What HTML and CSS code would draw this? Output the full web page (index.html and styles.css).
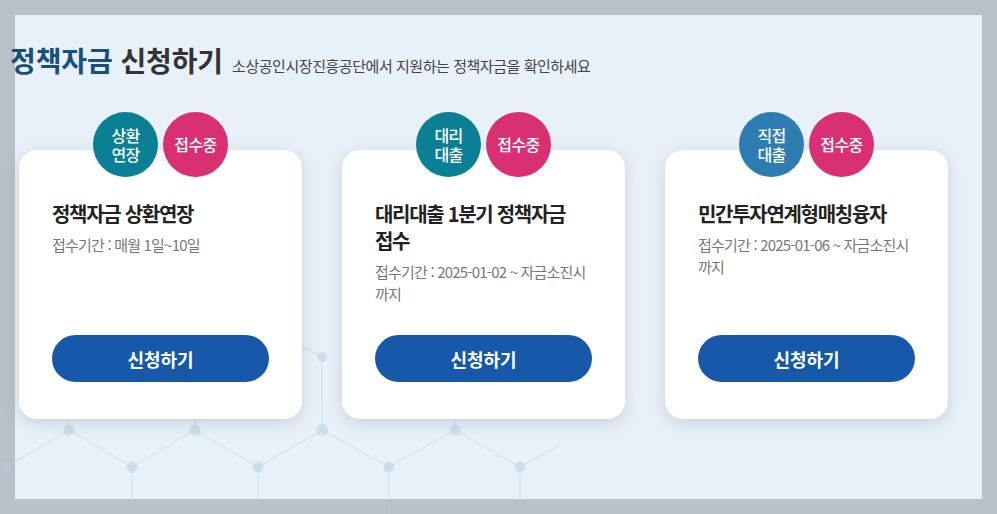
FILE: index.html
```html
<!DOCTYPE html>
<html lang="ko">
<head>
<meta charset="utf-8">
<title>정책자금 신청하기</title>
<link rel="stylesheet" href="styles.css">
</head>
<body>
<section class="panel">
  <svg class="network" width="997" height="514" viewBox="0 0 997 514" aria-hidden="true">
    <g class="lines">
      <polyline points="6,520 6,467 69,430 132,467 195,430 258,467 322,430 389,467 455,430 520,467 560,445"/>
      <line x1="132" y1="467" x2="132" y2="520"/>
      <line x1="258" y1="467" x2="258" y2="520"/>
      <line x1="389" y1="467" x2="389" y2="520"/>
      <line x1="520" y1="467" x2="520" y2="520"/>
      <line x1="322" y1="430" x2="322" y2="357"/>
      <line x1="322" y1="357" x2="290" y2="340"/>
      <line x1="69" y1="430" x2="69" y2="415"/>
      <line x1="195" y1="430" x2="195" y2="415"/>
      <line x1="455" y1="430" x2="455" y2="415"/>
    </g>
    <g class="nodes">
      <circle cx="6" cy="467" r="5.5"/>
      <circle cx="69" cy="430" r="5.5"/>
      <circle cx="132" cy="467" r="5.5"/>
      <circle cx="195" cy="430" r="5.5"/>
      <circle cx="258" cy="467" r="5.5"/>
      <circle cx="322" cy="430" r="6"/>
      <circle cx="322" cy="357" r="5"/>
      <circle cx="389" cy="467" r="5.5"/>
      <circle cx="455" cy="430" r="5.5"/>
      <circle cx="520" cy="467" r="5.5"/>
    </g>
  </svg>

  <header class="heading">
    <h1 class="title"><span class="title-accent">정책자금</span> 신청하기</h1>
    <p class="subtitle">소상공인시장진흥공단에서 지원하는 정책자금을 확인하세요</p>
  </header>

  <div class="cards">
    <article class="card">
      <div class="badges">
        <span class="badge badge-teal">상환<br>연장</span>
        <span class="badge badge-pink">접수중</span>
      </div>
      <h2 class="card-title">정책자금 상환연장</h2>
      <p class="card-period">접수기간 : 매월 1일~10일</p>
      <a class="apply-btn" href="#">신청하기</a>
    </article>

    <article class="card">
      <div class="badges">
        <span class="badge badge-teal">대리<br>대출</span>
        <span class="badge badge-pink">접수중</span>
      </div>
      <h2 class="card-title">대리대출 1분기 정책자금 접수</h2>
      <p class="card-period">접수기간 : 2025-01-02 ~ 자금소진시 까지</p>
      <a class="apply-btn" href="#">신청하기</a>
    </article>

    <article class="card">
      <div class="badges">
        <span class="badge badge-blue">직접<br>대출</span>
        <span class="badge badge-pink">접수중</span>
      </div>
      <h2 class="card-title">민간투자연계형매칭융자</h2>
      <p class="card-period">접수기간 : 2025-01-06 ~ 자금소진시 까지</p>
      <a class="apply-btn" href="#">신청하기</a>
    </article>
  </div>
</section>
</body>
</html>
```

FILE: styles.css
```css
* {
  box-sizing: border-box;
}

html, body {
  margin: 0;
  padding: 0;
}

body {
  width: 997px;
  height: 514px;
  overflow: hidden;
  background: #b9c0c8;
  font-family: "Noto Sans CJK KR", "Noto Sans", sans-serif;
  padding: 15px;
}

.panel {
  position: relative;
  width: 967px;
  height: 484px;
  background: #e8f0f8;
  padding: 26px 0 0 0;
}

.network {
  position: absolute;
  left: -15px;
  top: -15px;
  overflow: visible;
  pointer-events: none;
}

.network .lines polyline,
.network .lines line {
  fill: none;
  stroke: rgba(175, 208, 225, 0.32);
  stroke-width: 1.5;
}

.network .nodes circle {
  fill: rgba(175, 208, 225, 0.45);
}

.heading {
  position: relative;
  display: flex;
  align-items: baseline;
  gap: 9px;
  margin-left: -5px;
}

.title {
  margin: 0;
  font-size: 28px;
  line-height: 38px;
  font-weight: 700;
  letter-spacing: -0.1px;
  color: #333333;
}

.title-accent {
  color: #17507e;
}

.subtitle {
  margin: 0;
  font-size: 15px;
  line-height: 20px;
  color: #444444;
  letter-spacing: -0.45px;
}

.cards {
  position: relative;
  z-index: 1;
  display: flex;
  gap: 40px;
  margin-top: 71px;
  padding-left: 4px;
}

.card {
  position: relative;
  width: 283px;
  height: 269px;
  background: #ffffff;
  border-radius: 18px;
  box-shadow: 0 4px 16px rgba(40, 60, 90, 0.16);
  padding: 50px 33px 37px 33px;
  display: flex;
  flex-direction: column;
  word-break: keep-all;
}

.badges {
  position: absolute;
  left: 74px;
  top: -38px;
  display: flex;
  gap: 5px;
}

.badge {
  width: 65px;
  height: 65px;
  border-radius: 50%;
  display: flex;
  align-items: center;
  justify-content: center;
  text-align: center;
  color: #ffffff;
  font-size: 16px;
  line-height: 19px;
  font-weight: 500;
  letter-spacing: -0.6px;
}

.badge-teal {
  background: #0b7f93;
}

.badge-blue {
  background: #2e7db2;
}

.badge-pink {
  background: #d92f73;
}

.card-title {
  margin: 0;
  font-size: 20px;
  line-height: 27px;
  font-weight: 700;
  color: #222222;
  letter-spacing: -1.3px;
}

.card-period {
  margin: 7px 0 0 0;
  font-size: 15px;
  line-height: 22px;
  color: #777777;
  letter-spacing: -0.8px;
}

.apply-btn {
  margin-top: auto;
  display: flex;
  align-items: center;
  justify-content: center;
  height: 47px;
  border-radius: 24px;
  background: #1758aa;
  color: #ffffff;
  text-decoration: none;
  font-size: 18px;
  font-weight: 700;
  letter-spacing: 0;
}
```
